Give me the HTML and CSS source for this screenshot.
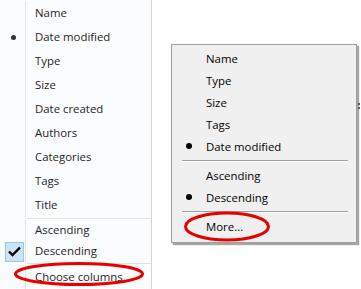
FILE: index.html
```html
<!DOCTYPE html>
<html lang="en">
<head>
  <meta charset="UTF-8">
  <title>Sort menus</title>
  <link rel="stylesheet" href="styles.css">
</head>
<body>

  <!-- Explorer-style sort menu (left) -->
  <div class="menu-left">
    <div class="row"><span class="icon"></span><span class="label">Name</span></div>
    <div class="row"><span class="icon"><i class="dot"></i></span><span class="label">Date modified</span></div>
    <div class="row"><span class="icon"></span><span class="label">Type</span></div>
    <div class="row"><span class="icon"></span><span class="label">Size</span></div>
    <div class="row"><span class="icon"></span><span class="label">Date created</span></div>
    <div class="row"><span class="icon"></span><span class="label">Authors</span></div>
    <div class="row"><span class="icon"></span><span class="label">Categories</span></div>
    <div class="row"><span class="icon"></span><span class="label">Tags</span></div>
    <div class="row"><span class="icon"></span><span class="label">Title</span></div>
    <div class="sep"></div>
    <div class="row short"><span class="icon"></span><span class="label">Ascending</span></div>
    <div class="row short"><span class="icon"><span class="check">
      <svg width="13" height="11" viewBox="0 0 13 11"><path d="M1 5.5 L4.5 9 L12 1.5" fill="none" stroke="#000" stroke-width="2.4"/></svg>
    </span></span><span class="label">Descending</span></div>
    <div class="sep"></div>
    <div class="row"><span class="icon"></span><span class="label">Choose columns...</span></div>
  </div>

  <!-- Classic sort menu (right) -->
  <div class="menu-right">
    <div class="item"><span class="mark"></span>Name</div>
    <div class="item"><span class="mark"></span>Type</div>
    <div class="item"><span class="mark"></span>Size</div>
    <div class="item"><span class="mark"></span>Tags</div>
    <div class="item"><span class="mark"><i class="dot"></i></span>Date modified</div>
    <div class="rule"></div>
    <div class="item"><span class="mark"></span>Ascending</div>
    <div class="item"><span class="mark"><i class="dot"></i></span>Descending</div>
    <div class="rule"></div>
    <div class="item"><span class="mark"></span>More...</div>
  </div>

  <!-- stray pixels of the window behind -->
  <div class="behind"></div>

  <!-- red highlight rings -->
  <svg class="rings" width="361" height="289" viewBox="0 0 361 289">
    <ellipse cx="79" cy="274" rx="63.5" ry="10.5" fill="none" stroke="#e60000" stroke-width="3"/>
    <ellipse cx="227" cy="226.5" rx="41.5" ry="13.5" fill="none" stroke="#e60000" stroke-width="3"/>
  </svg>

</body>
</html>
```

FILE: styles.css
```css
body { margin: 0; width: 361px; height: 289px; overflow: hidden; position: relative; background: #fff; font-family: "Open Sans", "Noto Sans", sans-serif; font-size: 11.4px; }

/* left menu */
.menu-left { position: absolute; left: 0; top: 0; width: 152px; height: 289px; padding-top: 1px; box-sizing: border-box; background: #fbfcfd; border-right: 1px solid #d4d4d4; color: #1e1e1e; }
.menu-left .row { display: flex; align-items: center; height: 24px; }
.menu-left .row.short { height: 21px; }
.menu-left .icon { width: 26px; height: 100%; border-right: 1px solid #e2e3e3; display: flex; align-items: center; padding-left: 5px; box-sizing: border-box; flex: none; }
.menu-left .label { padding-left: 9px; padding-bottom: 2px; }
.menu-left .dot { display: block; width: 5px; height: 5px; border-radius: 50%; background: #333; margin-left: 6px; }
.menu-left .sep { height: 1px; margin: 1px 0 0 27px; background: #e0e0e0; border-bottom: 1px solid #fff; }
.menu-left .check { width: 17px; height: 18px; border: 1px solid #90c8f6; background: #cce4f7; display: flex; align-items: center; justify-content: center; }

/* right menu */
.menu-right { position: absolute; left: 171px; top: 44px; width: 186px; height: 199px; box-sizing: border-box; padding-top: 3px; background: #f0f0f0; border: 1px solid #a0a0a0; box-shadow: 2px 2px 1px rgba(0,0,0,0.35); color: #000; }
.menu-right .item { display: flex; align-items: center; height: 22px; padding-bottom: 2px; box-sizing: border-box; }
.menu-right .mark { width: 34px; flex: none; display: flex; justify-content: center; }
.menu-right .dot { display: block; width: 6px; height: 6px; border-radius: 50%; background: #000; }
.menu-right .rule { height: 1px; margin: 2px 8px 3px 10px; background: #a0a0a0; border-bottom: 1px solid #fff; }

.behind { position: absolute; left: 358px; top: 103px; width: 2px; height: 6px; border-top: 2px solid #2a5a8a; border-bottom: 2px solid #7a5a30; box-sizing: border-box; }

.rings { position: absolute; left: 0; top: 0; pointer-events: none; }
```
